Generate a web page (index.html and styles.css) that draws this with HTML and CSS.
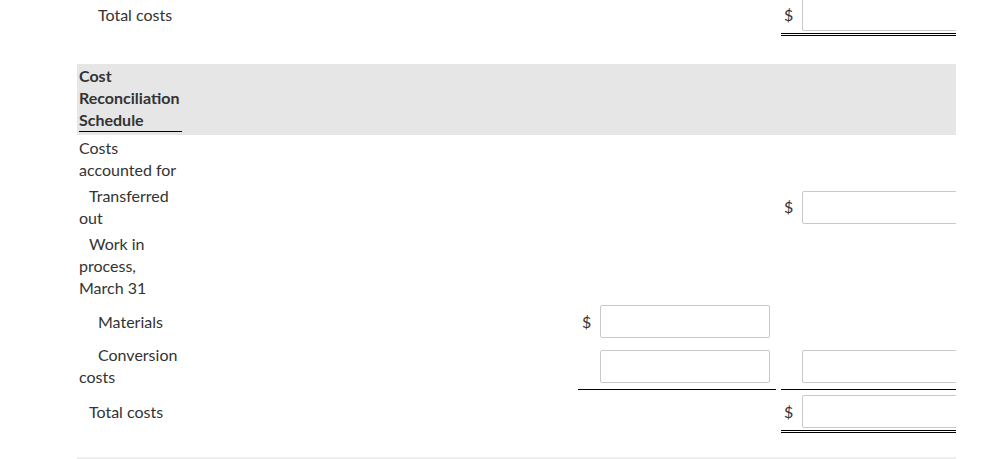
FILE: index.html
```html
<!DOCTYPE html>
<html>
<head>
<meta charset="utf-8">
<link rel="stylesheet" href="styles.css">
</head>
<body>
<div class="sheet">
  <div class="row">
    <div class="label indent2">Total costs</div>
    <div></div>
    <div></div>
    <div class="val right double"><span class="cur">$</span><span class="box"></span></div>
  </div>

  <div class="spacer"></div>

  <div class="row head">
    <div class="label strong">Cost Reconciliation Schedule</div>
    <div></div><div></div><div></div>
  </div>

  <div class="row">
    <div class="label">Costs accounted for</div>
    <div></div><div></div><div></div>
  </div>

  <div class="row">
    <div class="label indent1">Transferred out</div>
    <div></div>
    <div></div>
    <div class="val right"><span class="cur">$</span><span class="box"></span></div>
  </div>

  <div class="row">
    <div class="label indent1">Work in process, March 31</div>
    <div></div><div></div><div></div>
  </div>

  <div class="row">
    <div class="label indent2">Materials</div>
    <div></div>
    <div class="val mid"><span class="cur">$</span><span class="box"></span></div>
    <div></div>
  </div>

  <div class="row">
    <div class="label indent2">Conversion costs</div>
    <div></div>
    <div class="val mid single"><span class="cur"></span><span class="box"></span></div>
    <div class="val right single"><span class="cur"></span><span class="box"></span></div>
  </div>

  <div class="row">
    <div class="label indent1">Total costs</div>
    <div></div>
    <div></div>
    <div class="val right double total"><span class="cur">$</span><span class="box"></span></div>
  </div>

  <div class="footer-line"></div>
</div>
</body>
</html>
```

FILE: styles.css
```css
html, body {
  margin: 0;
  padding: 0;
  background: #ffffff;
}

body {
  font-family: Lato, "Open Sans", sans-serif;
  font-size: 16px;
  color: #333333;
  overflow: hidden;
}

.sheet {
  margin-top: -6px;
  margin-left: 77px;
  width: 879px;
  overflow: hidden;
}

.row {
  display: grid;
  grid-template-columns: 103px 396px 198px 203px;
  width: 902px;
  padding-left: 2px;
  box-sizing: border-box;
  align-items: stretch;
}

.label {
  line-height: 22px;
  padding: 2px 0;
  align-self: center;
}

.indent1 { text-indent: 10px; }
.indent2 { text-indent: 19px; }

.spacer { height: 28px; }

.head {
  background: #e6e6e6;
  padding-bottom: 3px;
}

.head .label {
  font-weight: 700;
  padding: 1px 0 0;
  border-bottom: 1px solid #000;
}

.val {
  display: flex;
  align-items: center;
  padding: 4px 0 4px 0;
}

.val.mid {
  padding-left: 4px;
}

.val.right {
  margin-left: 5px;
  padding-left: 3px;
}

.val.single {
  padding-bottom: 2px;
  border-bottom: 1px solid #000;
}

.val.double {
  padding-bottom: 2px;
  border-bottom: 3px double #000;
}

.val.total {
  padding-top: 5px;
}

.cur {
  width: 18px;
  flex: none;
  line-height: 20px;
}

.box {
  display: block;
  flex: none;
  width: 170px;
  height: 33px;
  box-sizing: border-box;
  border: 1px solid #c9c9c9;
  border-radius: 2px;
  background: #fff;
}

.footer-line {
  margin-top: 24px;
  height: 2px;
  background: #eeeeee;
}
```
